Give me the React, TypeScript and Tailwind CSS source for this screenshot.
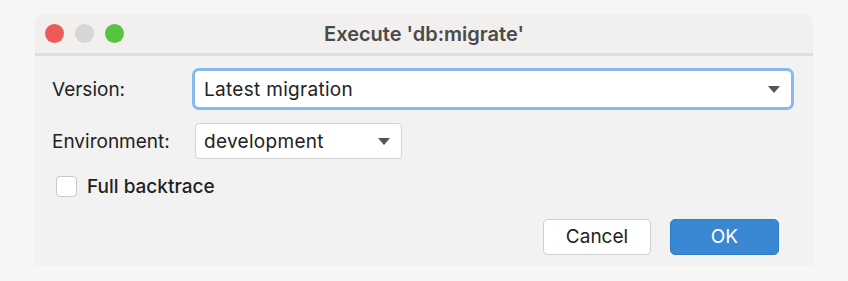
export default function App() {
  return (
    <div className="w-[848px] h-[281px] bg-[#f6f6f6] pt-[14px] pl-[35px] font-['Inter',sans-serif] text-[#222]">
      <div className="w-[778px] h-[252px] bg-[#f2f2f2] rounded-t-[9px] flex flex-col overflow-hidden">
        <div className="h-[42px] shrink-0 bg-[#f1f0ef] border-b-[3px] border-[#dedede] relative flex items-center justify-center">
          <div className="absolute left-[10px] top-[10px] flex gap-[11px]">
            <span className="w-[19px] h-[19px] rounded-full bg-[#ee5b57]" />
            <span className="w-[19px] h-[19px] rounded-full bg-[#d7d6d5]" />
            <span className="w-[19px] h-[19px] rounded-full bg-[#57c43f]" />
          </div>
          <span className="text-[20px] font-semibold text-[#4a4a4a] leading-none">Execute 'db:migrate'</span>
        </div>

        <div className="flex flex-col pl-[17px] pr-[22px] pt-[15px]">
          <div className="flex items-center">
            <span className="w-[143px] text-[19px] leading-none">Version:</span>
            <div className="flex-1 h-[36px] bg-white rounded-[4px] ring-[3px] ring-[#86b9f0] flex items-center justify-between pl-[9px] pr-[11px]">
              <span className="text-[19px] leading-none tracking-[0.3px]">Latest migration</span>
              <svg width="12" height="7" viewBox="0 0 12 7"><path d="M0 0h12L6 7z" fill="#555" /></svg>
            </div>
          </div>

          <div className="flex items-center mt-[16px]">
            <span className="w-[143px] text-[19px] leading-none">Environment:</span>
            <div className="w-[207px] h-[36px] bg-white rounded-[4px] border border-[#d4d4d4] flex items-center justify-between pl-[8px] pr-[11px]">
              <span className="text-[19px] leading-none tracking-[0.3px]">development</span>
              <svg width="12" height="7" viewBox="0 0 12 7"><path d="M0 0h12L6 7z" fill="#555" /></svg>
            </div>
          </div>

          <label className="flex items-center mt-[17px] ml-[4px]">
            <span className="w-[21px] h-[21px] bg-white rounded-[4px] border border-[#c9c9c9]" />
            <span className="ml-[10px] text-[19px] font-medium leading-none">Full backtrace</span>
          </label>

          <div className="flex justify-end gap-[19px] mt-[22px] pr-[12px]">
            <button className="w-[108px] h-[36px] bg-white rounded-[5px] border border-[#cfcfcf] text-[19px] text-[#222]">Cancel</button>
            <button className="w-[109px] h-[36px] bg-[#3a87d3] rounded-[5px] border border-[#2f7bc7] text-[19px] text-white">OK</button>
          </div>
        </div>
      </div>
    </div>
  )
}
